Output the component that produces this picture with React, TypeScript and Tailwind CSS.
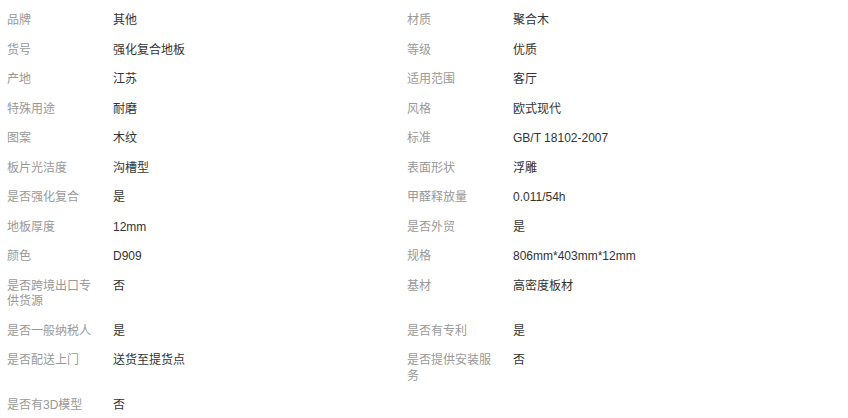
const rows: [string, string, string, string][] = [
  ["品牌", "其他", "材质", "聚合木"],
  ["货号", "强化复合地板", "等级", "优质"],
  ["产地", "江苏", "适用范围", "客厅"],
  ["特殊用途", "耐磨", "风格", "欧式现代"],
  ["图案", "木纹", "标准", "GB/T 18102-2007"],
  ["板片光洁度", "沟槽型", "表面形状", "浮雕"],
  ["是否强化复合", "是", "甲醛释放量", "0.011/54h"],
  ["地板厚度", "12mm", "是否外贸", "是"],
  ["颜色", "D909", "规格", "806mm*403mm*12mm"],
  ["是否跨境出口专供货源", "否", "基材", "高密度板材"],
  ["是否一般纳税人", "是", "是否有专利", "是"],
  ["是否配送上门", "送货至提货点", "是否提供安装服务", "否"],
  ["是否有3D模型", "否", "", ""],
];

const App = () => {
  return (
    <div className="w-[848px] h-[418px] overflow-hidden bg-white pt-[6px] font-['Liberation_Sans','Noto_Sans_CJK_SC',sans-serif] text-[12px] leading-[15.5px]">
      <div className="grid grid-cols-[106px_294px_106px_1fr]">
        {rows.map((r, i) => (
          <div key={i} className="contents">
            <div className="py-[7px] pl-[7px] pr-[10px] text-[#999]">{r[0]}</div>
            <div className="py-[7px] px-[7px] text-[#333]">{r[1]}</div>
            <div className="py-[7px] pl-[7px] pr-[10px] text-[#999]">{r[2]}</div>
            <div className="py-[7px] px-[7px] text-[#333]">{r[3]}</div>
          </div>
        ))}
      </div>
    </div>
  );
};

export default App;
